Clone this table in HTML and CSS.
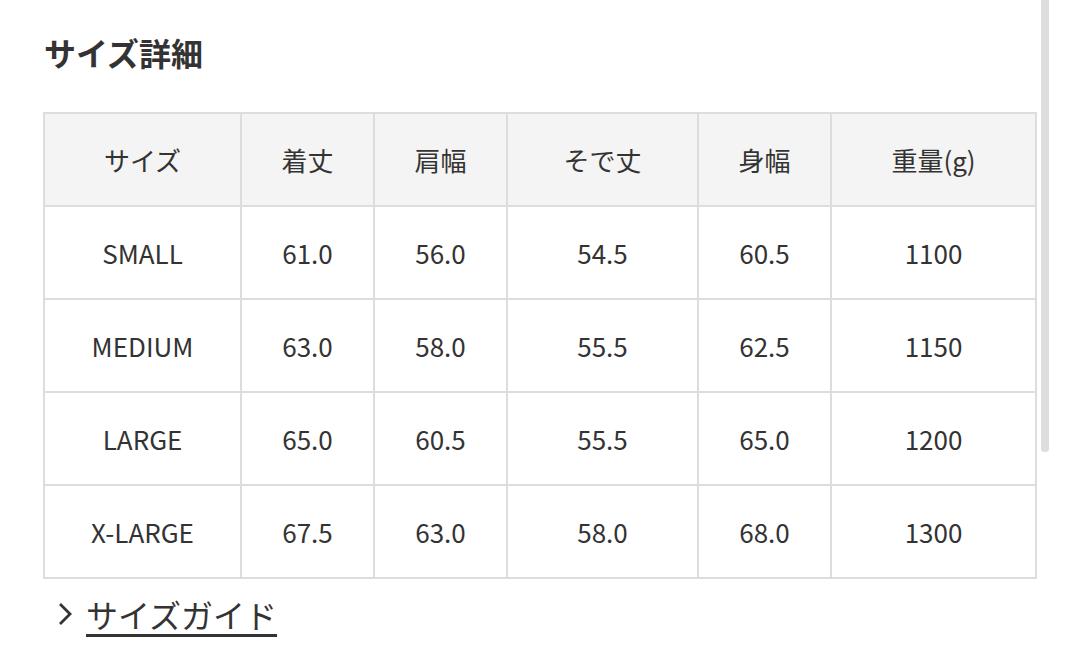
FILE: index.html
```html
<!DOCTYPE html>
<html lang="ja">
<head>
<meta charset="utf-8">
<link rel="stylesheet" href="styles.css">
</head>
<body>
<div class="page">
  <h2 class="title">サイズ詳細</h2>
  <table class="size-table">
    <colgroup>
      <col class="c1"><col class="c2"><col class="c3"><col class="c4"><col class="c5"><col class="c6">
    </colgroup>
    <thead>
      <tr><th>サイズ</th><th>着丈</th><th>肩幅</th><th>そで丈</th><th>身幅</th><th>重量(g)</th></tr>
    </thead>
    <tbody>
      <tr><td>SMALL</td><td>61.0</td><td>56.0</td><td>54.5</td><td>60.5</td><td>1100</td></tr>
      <tr><td>MEDIUM</td><td>63.0</td><td>58.0</td><td>55.5</td><td>62.5</td><td>1150</td></tr>
      <tr><td>LARGE</td><td>65.0</td><td>60.5</td><td>55.5</td><td>65.0</td><td>1200</td></tr>
      <tr><td>X-LARGE</td><td>67.5</td><td>63.0</td><td>58.0</td><td>68.0</td><td>1300</td></tr>
    </tbody>
  </table>
  <a class="guide" href="#">
    <svg class="chev" width="16" height="24" viewBox="0 0 16 24"><polyline points="3,2 13,12 3,22" fill="none" stroke="#333" stroke-width="2.8"/></svg>
    <span class="guide-text">サイズガイド</span>
  </a>
</div>
<div class="scrollbar"></div>
</body>
</html>
```

FILE: styles.css
```css
html, body {
  margin: 0;
  padding: 0;
  background: #fff;
}
body {
  font-family: "Noto Sans CJK JP", "Noto Sans", sans-serif;
  color: #333;
  width: 1080px;
  height: 648px;
  overflow: hidden;
  position: relative;
}
.page {
  padding: 0 0 0 44px;
}
.title {
  margin: 0;
  padding-top: 29px;
  font-size: 32px;
  line-height: 46px;
  font-weight: 700;
  color: #333;
}
.size-table {
  margin-top: 37px;
  margin-left: -1px;
  width: 992px;
  border-collapse: collapse;
  table-layout: fixed;
  border: 2px solid #ddd;
}
.c1 { width: 197px; }
.c2 { width: 133px; }
.c3 { width: 133px; }
.c4 { width: 191px; }
.c5 { width: 133px; }
.c6 { width: 205px; }
.size-table th,
.size-table td {
  border: 2px solid #ddd;
  height: 91px;
  padding: 0;
  text-align: center;
  font-size: 26px;
  font-weight: 400;
  color: #333;
}
.size-table th {
  background: #f4f4f4;
}
.guide {
  display: inline-flex;
  align-items: center;
  margin-top: 14px;
  margin-left: 13px;
  color: #333;
  text-decoration: none;
}
.chev {
  margin-right: 13px;
}
.guide-text {
  font-size: 32px;
  line-height: 42px;
  text-decoration: underline;
  text-decoration-thickness: 3px;
  text-underline-offset: 6px;
}
.scrollbar {
  position: absolute;
  left: 1041px;
  top: 0;
  width: 8px;
  height: 452px;
  background: #dedede;
  border-radius: 0 0 3px 3px;
}
```
